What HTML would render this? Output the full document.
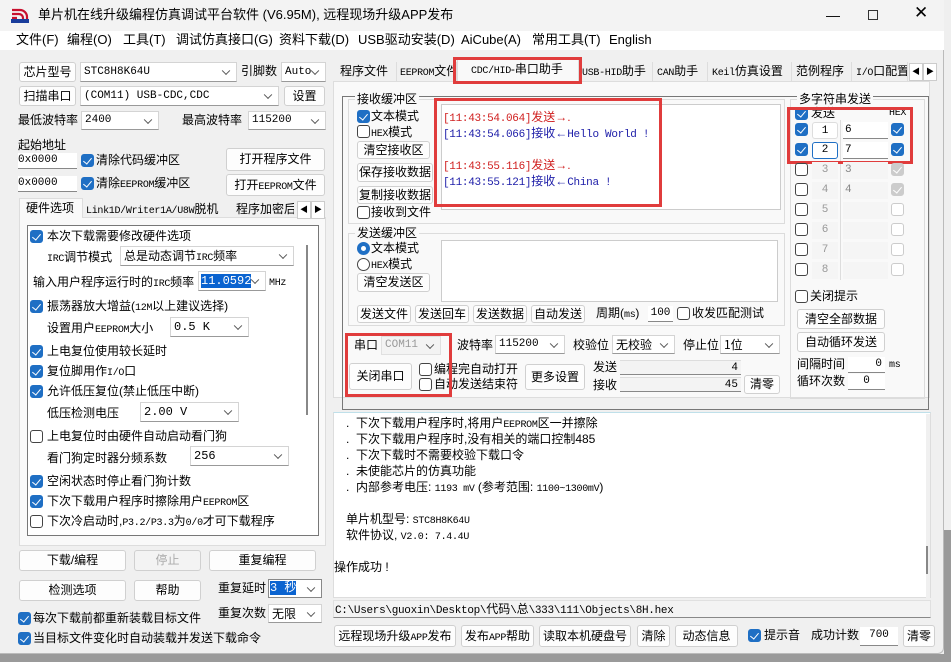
<!DOCTYPE html>
<html><head><meta charset="utf-8"><style>
*{box-sizing:border-box;margin:0;padding:0}
body{width:951px;height:662px;overflow:hidden;background:#f0f0f0;font-family:"Liberation Sans","Noto Sans CJK SC",sans-serif;font-size:12px;color:#000;position:relative}
.a{position:absolute;white-space:nowrap;line-height:16px;font-size:12px}
.btn{position:absolute;background:#fdfdfd;border:1px solid #d0d0d0;border-radius:3px;text-align:center;white-space:nowrap;font-size:12px}
.cmb{position:absolute;background:#fff;border:1px solid #d4d4d4;border-bottom-color:#999;padding-left:3px;font-family:"Liberation Mono","Noto Sans CJK SC",monospace;font-size:11px;white-space:nowrap}
.cmb:after{content:"";position:absolute;right:7px;top:50%;width:5px;height:5px;border-right:1px solid #555;border-bottom:1px solid #555;transform:translateY(-70%) rotate(45deg)}
.cb{position:absolute;width:13px;height:13px;border:1px solid #444;border-radius:3px;background:#fff}
.cb.on{background:#1f6fc4;border-color:#1f6fc4}
.cb.on:after{content:"";position:absolute;left:3px;top:1px;width:4px;height:7px;border-right:1.5px solid #fff;border-bottom:1.5px solid #fff;transform:rotate(40deg)}
.cb.gr{background:#ccc;border-color:#ccc}
.cb.dis{border-color:#ccc}
.inp{position:absolute;background:#fff;border-bottom:1px solid #888;font-family:"Liberation Mono",monospace;font-size:11px;white-space:nowrap}
.red{position:absolute;border:3px solid #e03c3c}
.mono{font-family:"Liberation Mono","Noto Sans CJK SC",monospace;font-size:10px;letter-spacing:-0.3px}
.grp{position:absolute;border:1px solid #dcdcdc}
.tab{position:absolute;top:62px;height:20px;line-height:19px;font-size:12px;white-space:nowrap;border-right:1px solid #ddd}
</style></head><body>
<div style="position:absolute;left:944px;top:0;width:7px;height:662px;background:#efefef"></div>
<div style="position:absolute;left:944px;top:530px;width:7px;height:132px;background:#9a9a9a"></div>
<div style="position:absolute;left:0;top:654px;width:951px;height:8px;background:#9a9a9a"></div>
<div style="position:absolute;left:0;top:0;width:944px;height:654px;background:#f0f0f0;border-right:1px solid #bbb;border-bottom:1px solid #bbb;border-radius:0 0 6px 0"></div>
<div style="position:absolute;left:0;top:0;width:944px;height:31px;background:#f3f3f3"></div>
<svg style="position:absolute;left:10px;top:6px" width="20" height="18" viewBox="0 0 20 18"><path d="M2 4h8a7 7 0 0 1 7 7v5M2 8h7a4 4 0 0 1 4 4v4M2 12h5" stroke="#c8102e" stroke-width="2.2" fill="none"/><rect x="1" y="13" width="18" height="4" fill="#1a3d9c"/></svg>
<div class="a" style="left:38px;top:7px;font-size:13px">单片机在线升级编程仿真调试平台软件 (V6.95M), 远程现场升级APP发布</div>
<div class="a" style="left:826px;top:7px;font-size:14px">—</div>
<div style="position:absolute;left:868px;top:10px;width:10px;height:10px;border:1px solid #333"></div>
<div class="a" style="left:914px;top:5px;font-size:17px;font-weight:300">✕</div>
<div style="position:absolute;left:0;top:31px;width:944px;height:19px;background:#fff"></div>
<div class="a" style="left:16px;top:32px;font-size:13px">文件(F)</div>
<div class="a" style="left:67px;top:32px;font-size:13px">编程(O)</div>
<div class="a" style="left:123px;top:32px;font-size:13px">工具(T)</div>
<div class="a" style="left:176px;top:32px;font-size:13px">调试仿真接口(G)</div>
<div class="a" style="left:279px;top:32px;font-size:13px">资料下载(D)</div>
<div class="a" style="left:358px;top:32px;font-size:13px">USB驱动安装(D)</div>
<div class="a" style="left:461px;top:32px;font-size:13px">AiCube(A)</div>
<div class="a" style="left:532px;top:32px;font-size:13px">常用工具(T)</div>
<div class="a" style="left:609px;top:32px;font-size:13px">English</div>

<div class="btn" style="left:19px;top:62px;width:57px;height:20px;line-height:18px">芯片型号</div>
<div class="cmb" style="left:80px;top:62px;width:157px;height:20px;line-height:18px">STC8H8K64U</div>
<div class="a" style="left:241px;top:63px">引脚数</div>
<div class="cmb" style="left:281px;top:62px;width:45px;height:20px;line-height:18px">Auto</div>
<div class="btn" style="left:19px;top:86px;width:57px;height:20px;line-height:18px">扫描串口</div>
<div class="cmb" style="left:80px;top:86px;width:199px;height:20px;line-height:18px">(COM11) USB-CDC,CDC</div>
<div class="btn" style="left:284px;top:86px;width:41px;height:20px;line-height:18px">设置</div>
<div class="a" style="left:18px;top:112px">最低波特率</div>
<div class="cmb" style="left:81px;top:111px;width:78px;height:19px;line-height:17px">2400</div>
<div class="a" style="left:182px;top:112px">最高波特率</div>
<div class="cmb" style="left:248px;top:111px;width:78px;height:19px;line-height:17px">115200</div>
<div class="a" style="left:18px;top:137px">起始地址</div>
<div class="inp" style="left:18px;top:153px;width:59px;height:16px;line-height:15px">0x0000</div>
<div class="cb on" style="left:81px;top:154px"></div>
<div class="a" style="left:96px;top:152px">清除代码缓冲区</div>
<div class="btn" style="left:226px;top:148px;width:99px;height:23px;line-height:21px">打开程序文件</div>
<div class="inp" style="left:18px;top:176px;width:59px;height:16px;line-height:15px">0x0000</div>
<div class="cb on" style="left:81px;top:177px"></div>
<div class="a" style="left:96px;top:175px">清除<span class="mono">EEPROM</span>缓冲区</div>
<div class="btn" style="left:226px;top:174px;width:99px;height:22px;line-height:20px">打开<span class="mono">EEPROM</span>文件</div>
<div style="position:absolute;left:19px;top:217px;width:307px;height:329px;background:#f9f9f9;border:1px solid #ddd"></div>
<div style="position:absolute;left:19px;top:198px;width:64px;height:20px;background:#f9f9f9;border:1px solid #ddd;border-bottom:none"></div>
<div class="a" style="left:26px;top:200px">硬件选项</div>
<div class="a" style="left:86px;top:201px"><span class="mono">Link1D/Writer1A/U8W</span>脱机</div>
<div class="a" style="left:236px;top:201px;width:58px;overflow:hidden">程序加密后</div>
<div class="a" style="left:297px;top:201px;font-size:8px;border:1px solid #ccc;background:#fff;padding:0 2px">◀</div>
<div class="a" style="left:311px;top:201px;font-size:8px;border:1px solid #ccc;background:#fff;padding:0 2px">▶</div>
<div style="position:absolute;left:27px;top:225px;width:292px;height:311px;background:#fff;border:1px solid #777"></div>
<div style="position:absolute;left:306px;top:245px;width:2px;height:170px;background:#888"></div>
<div class="cb on" style="left:30px;top:230px"></div><div class="a" style="left:47px;top:228px">本次下载需要修改硬件选项</div>
<div class="a" style="left:47px;top:249px"><span class="mono">IRC</span>调节模式</div>
<div class="cmb" style="left:120px;top:246px;width:174px;height:20px;line-height:18px;font-family:'Liberation Sans','Noto Sans CJK SC',sans-serif;font-size:12px">总是动态调节<span class="mono">IRC</span>频率</div>
<div class="a" style="left:33px;top:274px">输入用户程序运行时的<span class="mono">IRC</span>频率</div>
<div class="cmb" style="left:198px;top:271px;width:68px;height:20px;line-height:18px;padding-left:2px"><span style="background:#0a63d0;color:#fff;font-size:12px">11.0592</span></div>
<div class="a mono" style="left:269px;top:276px">MHz</div>
<div class="cb on" style="left:30px;top:300px"></div><div class="a" style="left:47px;top:298px">振荡器放大增益(<span class="mono">12M</span>以上建议选择)</div>
<div class="a" style="left:47px;top:320px">设置用户<span class="mono">EEPROM</span>大小</div>
<div class="cmb" style="left:170px;top:317px;width:79px;height:20px;line-height:18px;font-size:12px">0.5 K</div>
<div class="cb on" style="left:30px;top:345px"></div><div class="a" style="left:47px;top:343px">上电复位使用较长延时</div>
<div class="cb on" style="left:30px;top:365px"></div><div class="a" style="left:47px;top:363px">复位脚用作<span class="mono">I/O</span>口</div>
<div class="cb on" style="left:30px;top:385px"></div><div class="a" style="left:47px;top:383px">允许低压复位(禁止低压中断)</div>
<div class="a" style="left:47px;top:405px">低压检测电压</div>
<div class="cmb" style="left:140px;top:402px;width:99px;height:20px;line-height:18px;font-size:12px">2.00 V</div>
<div class="cb" style="left:30px;top:430px"></div><div class="a" style="left:47px;top:428px">上电复位时由硬件自动启动看门狗</div>
<div class="a" style="left:47px;top:450px">看门狗定时器分频系数</div>
<div class="cmb" style="left:190px;top:446px;width:99px;height:20px;line-height:18px;font-size:12px">256</div>
<div class="cb on" style="left:30px;top:475px"></div><div class="a" style="left:47px;top:473px">空闲状态时停止看门狗计数</div>
<div class="cb on" style="left:30px;top:495px"></div><div class="a" style="left:47px;top:493px">下次下载用户程序时擦除用户<span class="mono">EEPROM</span>区</div>
<div class="cb" style="left:30px;top:515px"></div><div class="a" style="left:47px;top:513px">下次冷启动时,<span class="mono">P3.2/P3.3</span>为<span class="mono">0/0</span>才可下载程序</div>
<div class="btn" style="left:19px;top:550px;width:107px;height:21px;line-height:19px">下载/编程</div>
<div class="btn" style="left:134px;top:550px;width:67px;height:21px;line-height:19px;color:#aaa;background:#f3f3f3">停止</div>
<div class="btn" style="left:209px;top:550px;width:107px;height:21px;line-height:19px">重复编程</div>
<div class="btn" style="left:19px;top:580px;width:107px;height:21px;line-height:19px">检测选项</div>
<div class="btn" style="left:134px;top:580px;width:67px;height:21px;line-height:19px">帮助</div>
<div class="a" style="left:218px;top:580px">重复延时</div>
<div class="cmb" style="left:268px;top:579px;width:54px;height:19px;line-height:17px;padding-left:1px;border-color:#888"><span style="background:#0a63d0;color:#fff;font-size:12px">3 秒</span></div>
<div class="a" style="left:218px;top:605px">重复次数</div>
<div class="cmb" style="left:268px;top:604px;width:54px;height:19px;line-height:17px;font-family:'Noto Sans CJK SC',sans-serif;font-size:12px">无限</div>
<div class="cb on" style="left:18px;top:612px"></div><div class="a" style="left:33px;top:610px">每次下载前都重新装载目标文件</div>
<div class="cb on" style="left:18px;top:632px"></div><div class="a" style="left:33px;top:630px">当目标文件变化时自动装载并发送下载命令</div>

<div style="position:absolute;left:333px;top:81px;width:597px;height:317px;background:#f9f9f9;border:1px solid #ddd"></div>
<div class="tab" style="left:336px;width:61px;padding-left:4px">程序文件</div>
<div class="tab" style="left:397px;width:60px;padding-left:3px;overflow:hidden"><span class="mono">EEPROM</span>文件</div>
<div class="tab" style="left:457px;top:59px;height:23px;width:122px;background:#f9f9f9;padding-left:13px;border:1px solid #ddd;border-bottom:none"><span class="mono">CDC/HID</span>-串口助手</div>
<div class="tab" style="left:580px;width:73px;padding-left:2px"><span class="mono">USB-HID</span>助手</div>
<div class="tab" style="left:653px;width:55px;padding-left:4px"><span class="mono">CAN</span>助手</div>
<div class="tab" style="left:708px;width:84px;padding-left:4px"><span class="mono">Keil</span>仿真设置</div>
<div class="tab" style="left:792px;width:60px;padding-left:4px">范例程序</div>
<div class="tab" style="left:852px;width:56px;padding-left:4px;overflow:hidden"><span class="mono">I/O</span>口配置</div>
<div class="a" style="left:909px;top:63px;font-size:8px;border:1px solid #ccc;background:#fff;padding:0 2px">◀</div>
<div class="a" style="left:923px;top:63px;font-size:8px;border:1px solid #ccc;background:#fff;padding:0 2px">▶</div>
<div class="red" style="left:453px;top:57px;width:129px;height:27px"></div>
<div style="position:absolute;left:342px;top:96px;width:587px;height:314px;border:1px solid #777"></div>
<div class="grp" style="left:348px;top:99px;width:437px;height:125px"></div>
<div class="a" style="left:355px;top:91px;background:#f9f9f9;padding:0 2px">接收缓冲区</div>
<div class="cb on" style="left:357px;top:110px"></div><div class="a" style="left:371px;top:108px">文本模式</div>
<div class="cb" style="left:357px;top:125px"></div><div class="a" style="left:371px;top:124px"><span class="mono">HEX</span>模式</div>
<div class="btn" style="left:357px;top:141px;width:73px;height:18px;line-height:16px">清空接收区</div>
<div class="btn" style="left:357px;top:163px;width:76px;height:19px;line-height:17px">保存接收数据</div>
<div class="btn" style="left:357px;top:186px;width:76px;height:18px;line-height:16px">复制接收数据</div>
<div class="cb" style="left:357px;top:206px"></div><div class="a" style="left:371px;top:204px">接收到文件</div>
<div style="position:absolute;left:441px;top:104px;width:340px;height:106px;background:#fff;border:1px solid #ccc"></div>
<div class="a" style="left:443px;top:109px;color:#d02020"><span class="mono" style="font-size:11px">[11:43:54.064]</span>发送→.</div>
<div class="a" style="left:443px;top:125px;color:#1c1ca8"><span class="mono" style="font-size:11px">[11:43:54.066]</span>接收←<span class="mono" style="font-size:11px">Hello World !</span></div>
<div class="a" style="left:443px;top:157px;color:#d02020"><span class="mono" style="font-size:11px">[11:43:55.116]</span>发送→.</div>
<div class="a" style="left:443px;top:173px;color:#1c1ca8"><span class="mono" style="font-size:11px">[11:43:55.121]</span>接收←<span class="mono" style="font-size:11px">China !</span></div>
<div class="red" style="left:434px;top:98px;width:228px;height:109px"></div>
<div class="grp" style="left:348px;top:233px;width:437px;height:93px"></div>
<div class="a" style="left:355px;top:225px;background:#f9f9f9;padding:0 2px">发送缓冲区</div>
<div style="position:absolute;left:357px;top:242px;width:13px;height:13px;border-radius:50%;border:4px solid #1f6fc4;background:#fff"></div><div class="a" style="left:371px;top:240px">文本模式</div>
<div style="position:absolute;left:357px;top:258px;width:13px;height:13px;border-radius:50%;border:1px solid #444;background:#fff"></div><div class="a" style="left:371px;top:256px"><span class="mono">HEX</span>模式</div>
<div class="btn" style="left:357px;top:273px;width:73px;height:19px;line-height:17px">清空发送区</div>
<div style="position:absolute;left:441px;top:240px;width:337px;height:62px;background:#fff;border:1px solid #ccc"></div>
<div class="btn" style="left:357px;top:305px;width:54px;height:18px;line-height:16px">发送文件</div>
<div class="btn" style="left:415px;top:305px;width:54px;height:18px;line-height:16px">发送回车</div>
<div class="btn" style="left:473px;top:305px;width:54px;height:18px;line-height:16px">发送数据</div>
<div class="btn" style="left:531px;top:305px;width:54px;height:18px;line-height:16px">自动发送</div>
<div class="a" style="left:596px;top:305px">周期(<span class="mono">ms</span>)</div>
<div class="inp" style="left:648px;top:306px;width:25px;height:16px;line-height:15px;text-align:center">100</div>
<div class="cb" style="left:677px;top:307px"></div><div class="a" style="left:692px;top:305px">收发匹配测试</div>
<div class="a" style="left:354px;top:337px">串口</div>
<div class="cmb" style="left:381px;top:336px;width:60px;height:19px;line-height:17px;color:#999;background:#f3f3f3;border-color:#e0e0e0">COM11</div>
<div class="btn" style="left:349px;top:363px;width:63px;height:27px;line-height:25px">关闭串口</div>
<div class="cb" style="left:419px;top:363px"></div><div class="a" style="left:434px;top:361px">编程完自动打开</div>
<div class="cb" style="left:419px;top:378px"></div><div class="a" style="left:434px;top:376px">自动发送结束符</div>
<div class="red" style="left:345px;top:333px;width:107px;height:64px"></div>
<div class="a" style="left:457px;top:337px">波特率</div>
<div class="cmb" style="left:495px;top:335px;width:70px;height:19px;line-height:17px">115200</div>
<div class="a" style="left:573px;top:337px">校验位</div>
<div class="cmb" style="left:612px;top:335px;width:63px;height:19px;line-height:17px;font-family:'Noto Sans CJK SC',sans-serif;font-size:12px">无校验</div>
<div class="a" style="left:683px;top:337px">停止位</div>
<div class="cmb" style="left:720px;top:335px;width:60px;height:19px;line-height:17px;font-family:'Noto Sans CJK SC',sans-serif;font-size:12px">1位</div>
<div class="btn" style="left:525px;top:364px;width:60px;height:26px;line-height:24px">更多设置</div>
<div class="a" style="left:593px;top:359px">发送</div>
<div class="inp" style="left:620px;top:360px;width:121px;height:15px;line-height:14px;text-align:right;padding-right:3px;background:#f3f3f3;border-top:1px solid #ddd">4</div>
<div class="a" style="left:593px;top:377px">接收</div>
<div class="inp" style="left:620px;top:377px;width:121px;height:15px;line-height:14px;text-align:right;padding-right:3px;background:#f3f3f3;border-top:1px solid #ddd">45</div>
<div class="btn" style="left:744px;top:375px;width:36px;height:19px;line-height:17px">清零</div>
<div class="grp" style="left:790px;top:99px;width:135px;height:300px"></div>
<div class="a" style="left:797px;top:91px;background:#f9f9f9;padding:0 2px">多字符串发送</div>
<div class="cb on" style="left:795px;top:107px"></div>
<div class="a" style="left:811px;top:105px">发送</div>
<div class="a mono" style="left:889px;top:106px">HEX</div>
<div style="position:absolute;left:840px;top:120px;width:1px;height:160px;background:#ddd"></div>
<div class="cb on" style="left:795px;top:123px"></div><div class="inp" style="left:812px;top:122px;width:26px;height:17px;line-height:16px;text-align:center;border:1px solid #ddd;border-radius:3px">1</div><div class="inp" style="left:843px;top:122px;width:45px;height:17px;line-height:16px;padding-left:2px">6</div><div class="cb on" style="left:891px;top:123px"></div>
<div class="cb on" style="left:795px;top:143px"></div><div class="inp" style="left:812px;top:142px;width:26px;height:17px;line-height:15px;text-align:center;border:1px solid #1f6fc4;border-radius:3px">2</div><div class="inp" style="left:843px;top:142px;width:45px;height:17px;line-height:16px;padding-left:2px">7</div><div class="cb on" style="left:891px;top:143px"></div>
<div class="red" style="left:787px;top:107px;width:126px;height:57px"></div>
<div class="cb" style="left:795px;top:163px"></div><div class="inp" style="left:812px;top:162px;width:26px;height:17px;line-height:16px;text-align:center;color:#999;background:#f5f5f5;border:none">3</div><div class="inp" style="left:843px;top:162px;width:45px;height:17px;line-height:16px;padding-left:2px;color:#888;background:#f5f5f5;border:none">3</div><div class="cb on gr" style="left:891px;top:163px"></div>
<div class="cb" style="left:795px;top:183px"></div><div class="inp" style="left:812px;top:182px;width:26px;height:17px;line-height:16px;text-align:center;color:#999;background:#f5f5f5;border:none">4</div><div class="inp" style="left:843px;top:182px;width:45px;height:17px;line-height:16px;padding-left:2px;color:#888;background:#f5f5f5;border:none">4</div><div class="cb on gr" style="left:891px;top:183px"></div>
<div class="cb" style="left:795px;top:203px"></div><div class="inp" style="left:812px;top:202px;width:26px;height:17px;line-height:16px;text-align:center;color:#999;background:#f5f5f5;border:none">5</div><div class="inp" style="left:843px;top:202px;width:45px;height:17px;background:#f5f5f5;border:none"></div><div class="cb dis" style="left:891px;top:203px"></div>
<div class="cb" style="left:795px;top:223px"></div><div class="inp" style="left:812px;top:222px;width:26px;height:17px;line-height:16px;text-align:center;color:#999;background:#f5f5f5;border:none">6</div><div class="inp" style="left:843px;top:222px;width:45px;height:17px;background:#f5f5f5;border:none"></div><div class="cb dis" style="left:891px;top:223px"></div>
<div class="cb" style="left:795px;top:243px"></div><div class="inp" style="left:812px;top:242px;width:26px;height:17px;line-height:16px;text-align:center;color:#999;background:#f5f5f5;border:none">7</div><div class="inp" style="left:843px;top:242px;width:45px;height:17px;background:#f5f5f5;border:none"></div><div class="cb dis" style="left:891px;top:243px"></div>
<div class="cb" style="left:795px;top:263px"></div><div class="inp" style="left:812px;top:262px;width:26px;height:17px;line-height:16px;text-align:center;color:#999;background:#f5f5f5;border:none">8</div><div class="inp" style="left:843px;top:262px;width:45px;height:17px;background:#f5f5f5;border:none"></div><div class="cb dis" style="left:891px;top:263px"></div>
<div class="cb" style="left:795px;top:290px"></div><div class="a" style="left:810px;top:288px">关闭提示</div>
<div class="btn" style="left:797px;top:309px;width:88px;height:20px;line-height:18px">清空全部数据</div>
<div class="btn" style="left:797px;top:332px;width:88px;height:20px;line-height:18px">自动循环发送</div>
<div class="a" style="left:797px;top:356px">间隔时间</div>
<div class="inp" style="left:848px;top:357px;width:37px;height:16px;line-height:15px;text-align:right;padding-right:3px">0</div>
<div class="a mono" style="left:889px;top:358px">ms</div>
<div class="a" style="left:797px;top:373px">循环次数</div>
<div class="inp" style="left:848px;top:374px;width:37px;height:16px;line-height:15px;text-align:center">0</div>

<div style="position:absolute;left:333px;top:412px;width:598px;height:186px;background:#fff;border:1px solid #ddd;border-top:1px solid #bfe0ea"></div>
<div style="position:absolute;left:926px;top:414px;width:4px;height:184px;background:#f0f0f0"></div>
<div style="position:absolute;left:926px;top:546px;width:2px;height:28px;background:#888"></div>
<div class="a" style="left:346px;top:415px">.&nbsp; 下次下载用户程序时,将用户<span class="mono">EEPROM</span>区一并擦除</div>
<div class="a" style="left:346px;top:431px">.&nbsp; 下次下载用户程序时,没有相关的端口控制485</div>
<div class="a" style="left:346px;top:447px">.&nbsp; 下次下载时不需要校验下载口令</div>
<div class="a" style="left:346px;top:463px">.&nbsp; 未使能芯片的仿真功能</div>
<div class="a" style="left:346px;top:479px">.&nbsp; 内部参考电压: <span class="mono">1193 mV</span> (参考范围: <span class="mono">1100~1300mV</span>)</div>
<div class="a" style="left:346px;top:511px">单片机型号: <span class="mono">STC8H8K64U</span></div>
<div class="a" style="left:346px;top:527px">软件协议, <span class="mono">V2.0: 7.4.4U</span></div>
<div class="a" style="left:334px;top:559px">操作成功 !</div>
<div style="position:absolute;left:333px;top:600px;width:598px;height:18px;background:#f3f3f3;border:1px solid #e0e0e0;border-bottom:1px solid #888"></div>
<div class="a" style="left:335px;top:601px"><span class="mono" style="font-size:11px">C:\Users\guoxin\Desktop\</span>代码<span class="mono" style="font-size:11px">\</span>总<span class="mono" style="font-size:11px">\333\111\Objects\8H.hex</span></div>
<div class="btn" style="left:334px;top:625px;width:122px;height:22px;line-height:20px">远程现场升级<span class="mono">APP</span>发布</div>
<div class="btn" style="left:461px;top:625px;width:73px;height:22px;line-height:20px">发布<span class="mono">APP</span>帮助</div>
<div class="btn" style="left:539px;top:625px;width:92px;height:22px;line-height:20px">读取本机硬盘号</div>
<div class="btn" style="left:637px;top:625px;width:33px;height:22px;line-height:20px">清除</div>
<div class="btn" style="left:675px;top:625px;width:63px;height:22px;line-height:20px">动态信息</div>
<div class="cb on" style="left:748px;top:629px"></div><div class="a" style="left:764px;top:627px">提示音</div>
<div class="a" style="left:811px;top:627px">成功计数</div>
<div class="inp" style="left:860px;top:627px;width:38px;height:19px;line-height:17px;text-align:center">700</div>
<div class="btn" style="left:903px;top:625px;width:32px;height:22px;line-height:20px">清零</div>
</body></html>
